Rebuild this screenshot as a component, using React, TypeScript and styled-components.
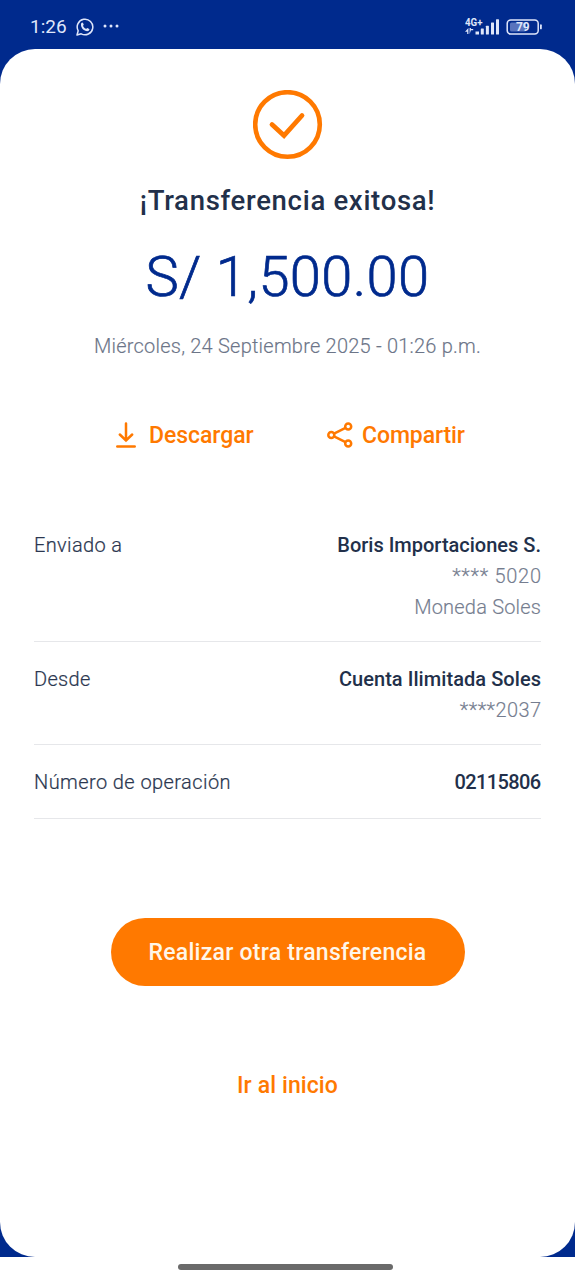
import React from "react";
import styled, { createGlobalStyle } from "styled-components";

const GlobalStyle = createGlobalStyle`
  *, *::before, *::after { box-sizing: border-box; }
  body { margin: 0; background: #fff; font-family: Roboto, "Noto Sans", sans-serif; }
  svg { display: block; flex: none; }
  button { font: inherit; border: 0; padding: 0; background: none; }
`;

const orange = "#ff7900";
const blue = "#002a8d";
const ink = "#22304a";
const gray = "#757d8f";

const Screen = styled.div`
  width: 575px;
  height: 1280px;
  display: flex;
  flex-direction: column;
  overflow: hidden;
  background: #fff;
`;

const AppArea = styled.div`
  height: 1257px;
  background: ${blue};
  display: flex;
  flex-direction: column;
`;

const StatusBar = styled.header`
  height: 49px;
  padding: 4px 32px 0 30px;
  display: flex;
  align-items: center;
  justify-content: space-between;
  color: #dfe6fa;
`;

const StatusGroup = styled.div<{ $gap: number }>`
  display: flex;
  align-items: center;
  gap: ${(p) => p.$gap}px;
`;

const Clock = styled.span`
  width: 37px;
  padding-top: 1px;
  font-size: 19px;
  line-height: 22px;
  white-space: nowrap;
`;

const Card = styled.main`
  height: 1208px;
  padding: 41px 34px 0;
  border-radius: 35px;
  background: #fff;
  display: flex;
  flex-direction: column;
  align-items: center;
`;

const Title = styled.h1`
  margin: 23px 0 0;
  font-size: 27.5px;
  font-weight: 500;
  line-height: 36px;
  letter-spacing: 0.7px;
  color: ${ink};
  white-space: nowrap;
`;

const Amount = styled.div`
  margin-top: 23px;
  font-size: 56px;
  font-weight: 300;
  line-height: 70px;
  letter-spacing: 0.4px;
  color: ${blue};
  -webkit-text-stroke: 0.7px ${blue};
  white-space: nowrap;
`;

const DateLine = styled.div`
  margin-top: 21px;
  font-size: 20px;
  font-weight: 300;
  line-height: 26px;
  color: #6c7588;
  -webkit-text-stroke: 0.15px currentColor;
  letter-spacing: 0.22px;
  white-space: nowrap;
`;

const Actions = styled.div`
  width: 349px;
  margin: 62px 0 0 6px;
  display: flex;
  justify-content: space-between;
`;

const Action = styled.button<{ $gap: number }>`
  height: 30px;
  display: flex;
  align-items: center;
  gap: ${(p) => p.$gap}px;
  color: ${orange};

  svg { margin-bottom: 2px; }
`;

const ActionLabel = styled.span<{ $spacing: number }>`
  font-size: 23px;
  font-weight: 500;
  line-height: 30px;
  letter-spacing: ${(p) => p.$spacing}px;
  margin-right: ${(p) => -p.$spacing}px;
  white-space: nowrap;
`;

const Details = styled.dl`
  width: 507px;
  margin: 62px 0 0;
`;

const Row = styled.div<{ $height: number; $top: number }>`
  height: ${(p) => p.$height}px;
  padding-top: ${(p) => p.$top}px;
  border-bottom: 1px solid #e6e7ea;
  display: flex;
  justify-content: space-between;
`;

const Label = styled.dt<{ $spacing: number }>`
  font-size: 20px;
  font-weight: 300;
  line-height: 31px;
  letter-spacing: ${(p) => p.$spacing}px;
  color: #2b3750;
  -webkit-text-stroke: 0.2px currentColor;
  white-space: nowrap;
`;

const Values = styled.dd`
  margin: 0;
  display: flex;
  flex-direction: column;
  align-items: flex-end;
`;

const Value = styled.span<{ $strong?: boolean; $spacing: number }>`
  font-size: 20px;
  font-weight: ${(p) => (p.$strong ? 500 : 300)};
  line-height: 31px;
  letter-spacing: ${(p) => p.$spacing}px;
  margin-right: ${(p) => -p.$spacing}px;
  color: ${(p) => (p.$strong ? ink : gray)};
  -webkit-text-stroke: ${(p) => (p.$strong ? 0 : 0.15)}px currentColor;
  white-space: nowrap;
`;

const PrimaryButton = styled.button`
  width: 354px;
  height: 68px;
  margin-top: 99px;
  border-radius: 34px;
  background: ${orange};
  color: #fff6e9;
  font-size: 23px;
  font-weight: 500;
  letter-spacing: 0.25px;
  white-space: nowrap;
`;

const LinkButton = styled.button`
  margin-top: 84px;
  color: ${orange};
  font-size: 23px;
  font-weight: 500;
  line-height: 32px;
  letter-spacing: 0.1px;
  white-space: nowrap;
`;

const GestureArea = styled.footer`
  height: 23px;
  padding-top: 7px;
  padding-left: 178px;
`;

const GestureBar = styled.div`
  width: 215px;
  height: 6px;
  border-radius: 3px;
  background: #6a6a6a;
`;

const WhatsappIcon = () => (
  <svg width="18" height="18" viewBox="0 0 18 18" fill="none" stroke="currentColor">
    <path d="M1 17l1.2-4.2A7.8 7.8 0 1 1 5.2 15.8L1 17z" strokeWidth="1.5" strokeLinejoin="round" />
    <path
      d="M5.4 4.9c.6-.7 1.3-.7 1.6 0l.7 1.7c.1.4-.7 1-.6 1.3.6 1.3 1.6 2.3 3 2.9.4.1.9-1 1.3-.8l1.8.9c.5.3.1 1.3-.5 1.8-1.3 1-3.5.3-5.2-1C5.8 10.3 4.2 7 5.4 4.9z"
      fill="currentColor"
      stroke="none"
    />
  </svg>
);

const MoreDots = () => (
  <svg width="16" height="6" viewBox="0 0 16 6" fill="currentColor">
    <circle cx="2" cy="2" r="1.5" />
    <circle cx="8" cy="2" r="1.5" />
    <circle cx="14" cy="2" r="1.5" />
  </svg>
);

const SignalIcon = () => (
  <svg width="36" height="18" viewBox="0 0 36 18" fill="currentColor">
    <text x="0" y="7.5" fontSize="10" fontWeight="700" textLength="17.5" lengthAdjust="spacingAndGlyphs">
      4G+
    </text>
    <path d="M3.4 10v6H2.2v-2.3H0zM4.6 16.2V10h1.3v1h2.3v1.2H5.9z" />
    <rect x="10.5" y="13.5" width="3.5" height="3" />
    <rect x="15.8" y="10.5" width="3" height="6" rx=".5" />
    <rect x="20.9" y="7.8" width="3" height="8.7" rx=".5" />
    <rect x="26" y="4.5" width="3" height="12" rx=".5" />
    <rect x="31" y="1.2" width="3" height="15.3" rx=".5" />
  </svg>
);

const BatteryIcon = () => (
  <svg width="37" height="16" viewBox="0 0 37 16">
    <rect x="4" y="3.5" width="16" height="9" rx="1.5" fill="#5873bd" />
    <rect x="1.2" y=".9" width="31" height="14.2" rx="3.5" fill="none" stroke="currentColor" strokeWidth="1.5" />
    <rect x="34" y="5.3" width="1.8" height="5" rx=".9" fill="currentColor" />
    <text x="16.8" y="12.2" fontSize="12" fontWeight="700" textAnchor="middle" fill="currentColor">
      79
    </text>
  </svg>
);

const SuccessIcon = () => (
  <svg width="70" height="70" viewBox="0 0 70 70" fill="none" stroke={orange}>
    <circle cx="34.5" cy="34.5" r="32.3" strokeWidth="4.6" />
    <path d="M19 34.5L31 45.5L49 25.5" strokeWidth="4.8" strokeLinecap="round" />
  </svg>
);

const DownloadIcon = () => (
  <svg width="20" height="26" viewBox="0 0 20 26" fill="none" stroke="currentColor" strokeWidth="2.5">
    <path d="M10 1.5V18.5M3.8 12.5L10 18.5l6.200-6" strokeLinecap="round" />
    <path d="M1.3 24.5h17.4" strokeLinecap="round" />
  </svg>
);

const ShareIcon = () => (
  <svg width="26" height="26" viewBox="0 0 26 26" fill="none" stroke="currentColor" strokeWidth="2.5">
    <circle cx="4.3" cy="13" r="3" />
    <circle cx="21.2" cy="4.5" r="3" />
    <circle cx="21.2" cy="21.5" r="3" />
    <path d="M7 11.6l11.5-5.700M7 14.4l11.5 5.700" />
  </svg>
);

export default function App() {
  return (
    <Screen>
      <GlobalStyle />
      <AppArea>
        <StatusBar>
          <StatusGroup $gap={9}>
            <Clock>1:26</Clock>
            <WhatsappIcon />
            <MoreDots />
          </StatusGroup>
          <StatusGroup $gap={5}>
            <SignalIcon />
            <BatteryIcon />
          </StatusGroup>
        </StatusBar>
        <Card>
          <SuccessIcon />
          <Title>¡Transferencia exitosa!</Title>
          <Amount>S/ 1,500.00</Amount>
          <DateLine>Miércoles, 24 Septiembre 2025 - 01:26 p.m.</DateLine>
          <Actions>
            <Action $gap={13}>
              <DownloadIcon />
              <ActionLabel $spacing={-0.05}>Descargar</ActionLabel>
            </Action>
            <Action $gap={9}>
              <ShareIcon />
              <ActionLabel $spacing={-0.1}>Compartir</ActionLabel>
            </Action>
          </Actions>
          <Details>
            <Row $height={129} $top={17}>
              <Label $spacing={0.35}>Enviado a</Label>
              <Values>
                <Value $strong $spacing={0}>Boris Importaciones S.</Value>
                <Value $spacing={0.7}>**** 5020</Value>
                <Value $spacing={0.2}>Moneda Soles</Value>
              </Values>
            </Row>
            <Row $height={103} $top={22}>
              <Label $spacing={0.3}>Desde</Label>
              <Values>
                <Value $strong $spacing={0.06}>Cuenta Ilimitada Soles</Value>
                <Value $spacing={0.4}>****2037</Value>
              </Values>
            </Row>
            <Row $height={74} $top={22}>
              <Label $spacing={0.42}>Número de operación</Label>
              <Values>
                <Value $strong $spacing={-0.65}>02115806</Value>
              </Values>
            </Row>
          </Details>
          <PrimaryButton>Realizar otra transferencia</PrimaryButton>
          <LinkButton>Ir al inicio</LinkButton>
        </Card>
      </AppArea>
      <GestureArea>
        <GestureBar />
      </GestureArea>
    </Screen>
  );
}
